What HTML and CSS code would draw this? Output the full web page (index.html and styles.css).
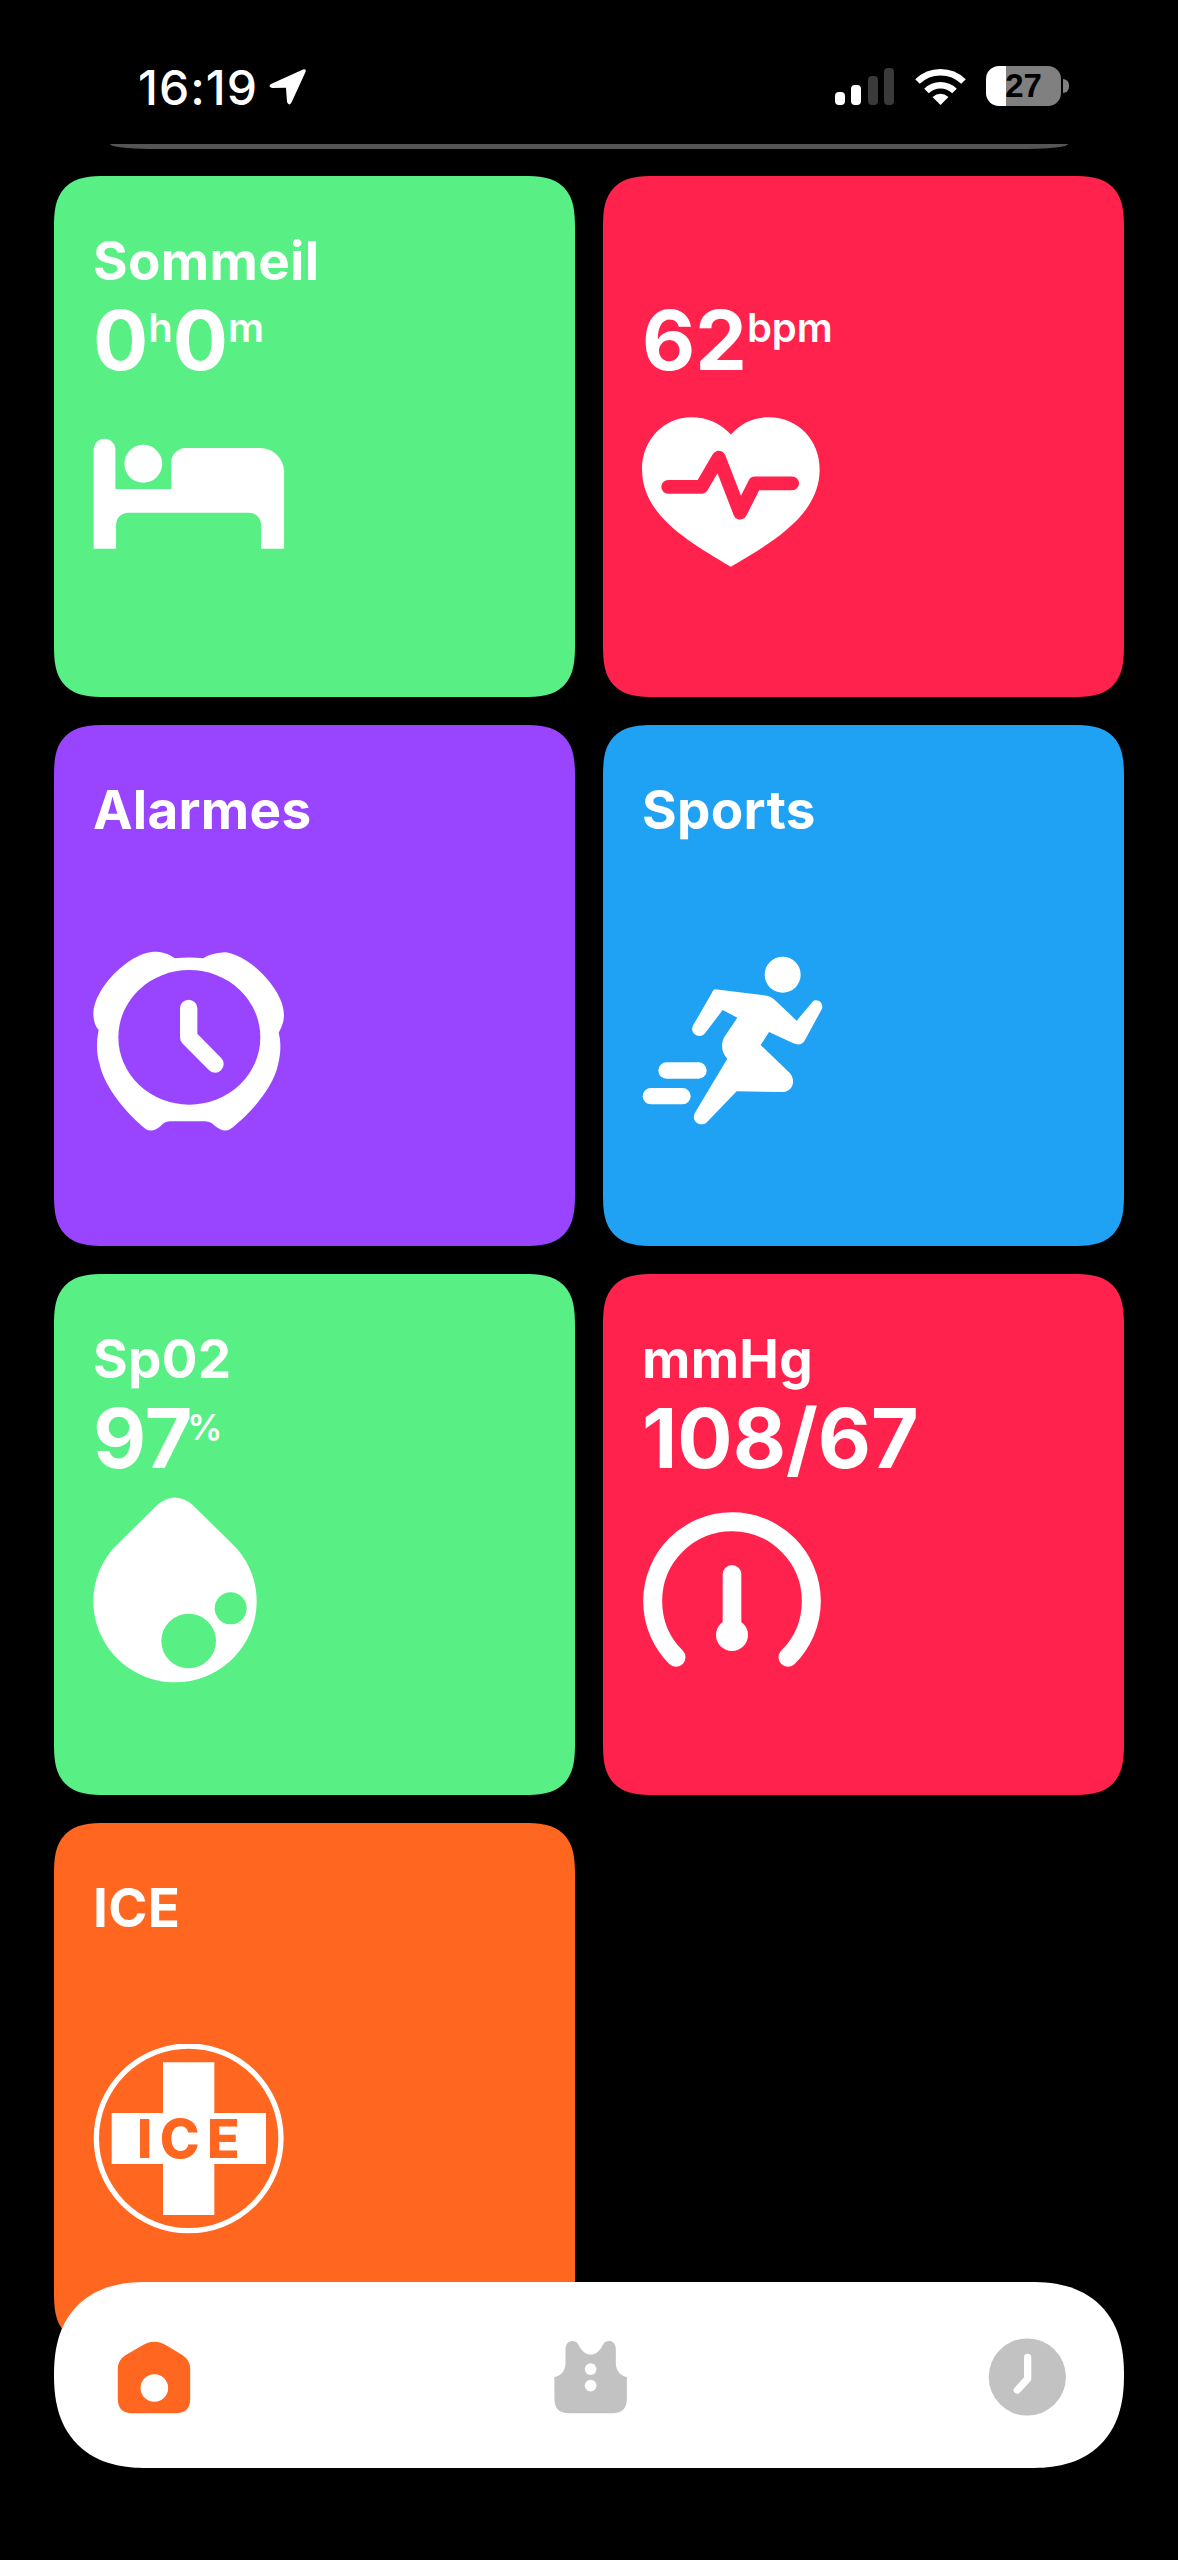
FILE: index.html
```html
<!DOCTYPE html>
<html lang="en">
<head>
    <meta charset="UTF-8">
    <meta name="viewport" content="width=device-width, initial-scale=1.0">
    <title>Health</title>
    <link rel="stylesheet" href="styles.css">
</head>
<body>
    <div class="status-bar">
        <div class="status-left">
            <span class="time">16:19</span>
            <svg class="location" viewBox="0 0 37 36"><path d="M34 .6 2 15q-3.500 2.500 1 4l14-.2 1 14.200q2 4.500 4.500 .5L36.500 3q1-3.500-2.500-2.400Z"/></svg>
        </div>
        <div class="status-right">
            <div class="signal">
                <i class="bar bar-1"></i>
                <i class="bar bar-2"></i>
                <i class="bar bar-3 off"></i>
                <i class="bar bar-4 off"></i>
            </div>
            <svg class="wifi" viewBox="0 0 53 38">
                <path class="wifi-arc" d="M3.500 14.500a33 33 0 0 1 46 0"/>
                <path class="wifi-arc" d="M12.500 24a20 20 0 0 1 28 0"/>
                <path d="M26.500 38 18.500 30q8-6.500 16 0Z"/>
            </svg>
            <div class="battery">27</div>
            <div class="battery-cap"></div>
        </div>
    </div>
    <div class="divider"></div>

    <div class="tiles">
        <div class="tile green">
            <div class="label">Sommeil</div>
            <div class="value">0<span class="unit">h</span>0<span class="unit">m</span></div>
            <svg class="icon" viewBox="125 659 557.600 557.600"><path d="M127 812a31.500 31.500 0 0 1 63 0V926H352V850a43 43 0 0 1 43-43H610a70 70 0 0 1 70 70V1100H613V1030a35 35 0 0 0-35-35H227a35 35 0 0 0-35 35V1100H127Z"/><circle cx="271" cy="853" r="55"/></svg>
        </div>
        <div class="tile red">
            <div class="label"></div>
            <div class="value">62<span class="unit">bpm</span></div>
            <svg class="icon" viewBox="122 659 557.600 557.600"><path d="M380 768C350 735 310 718 265 718 185 718 122 785 122 868 122 1000 250 1075 380 1152 510 1075 638 1000 638 868 638 785 575 718 490 718 445 718 410 735 380 768Z"/><path class="pulse" d="M198 920H295L345 835 407 995 450 910H558"/></svg>
        </div>
        <div class="tile purple">
            <div class="label">Alarmes</div>
            <div class="value"></div>
            <svg class="icon" viewBox="99 78 576 576"><path d="M345 115Q387 110 430 115 450 100 495 97C570 105 672 210 672 285 672 305 665 322 656 338 664 370 662 400 655 430 640 510 560 590 510 628 495 636 480 630 465 618 455 607 445 604 430 604H335C320 604 312 607 302 618 290 630 272 636 258 628 210 590 135 510 118 430 110 400 108 370 116 330 105 318 100 300 100 280 102 205 205 100 280 95 305 95 325 100 345 115Z"/><ellipse class="cut" cx="388" cy="352" rx="213" ry="202"/><path class="hand" d="M386 265V352L465 432"/></svg>
        </div>
        <div class="tile blue">
            <div class="label">Sports</div>
            <div class="value"></div>
            <svg class="icon" viewBox="66 48 576 576"><circle cx="488" cy="134" r="54"/><rect x="115" y="397" width="145" height="49" rx="24.500"/><rect x="68" y="474" width="144" height="49" rx="24.500"/><path d="M285 178 440 197C455 200 462 208 470 215L530 272 578 215C590 203 612 218 606 236L555 330C548 344 535 346 520 340L447 306 422 345 510 430C530 455 515 486 490 486L350 484 262 575C245 595 210 575 225 548L322 386C305 370 300 340 315 318L352 263 308 240 255 310C240 330 205 310 220 285L275 190C278 182 282 178 285 178Z"/></svg>
        </div>
        <div class="tile green">
            <div class="label">Sp02</div>
            <div class="value">97<span class="unit pct">%</span></div>
            <svg class="icon" viewBox="99 585 576 576"><path d="M292 615Q345 570 398 615L520 735C565 780 590 840 590 903 590 1038 480 1147 345 1147 210 1147 100 1038 100 903 100 840 125 780 170 735Z"/><circle class="cut" cx="386" cy="1023" r="82"/><circle class="cut" cx="512" cy="925" r="48"/></svg>
        </div>
        <div class="tile red">
            <div class="label">mmHg</div>
            <div class="value">108/67</div>
            <svg class="icon" viewBox="66 525 576 576"><path class="gauge" d="M168 1012A238 238 0 1 1 504 1012"/><path class="needle" d="M336 763V945"/><circle cx="336" cy="945" r="48"/></svg>
        </div>
        <div class="tile orange">
            <div class="label">ICE</div>
            <div class="value"></div>
            <svg class="icon" viewBox="99 72 576 576"><circle class="ring" cx="386" cy="355" r="277"/><path d="M309 127H463V279H618V432H463V585H309V432H155V279H309Z"/><text class="ice-text" x="231 299 441" y="415">ICE</text></svg>
        </div>
    </div>

    <!-- floats over the last tile -->
    <nav class="tab-bar">
        <svg class="tab" viewBox="41 49 232 232"><path class="tab-on" d="M120 75Q158 50 196 75L240 102Q262 116 262 142V228Q262 270 220 270H94Q52 270 52 228V142Q52 116 74 102Z"/><circle class="tab-hole" cx="158" cy="197" r="40"/></svg>
        <svg class="tab" viewBox="32 49 232 232"><path class="tab-off" d="M74 85C74 55 105 55 112 72 122 92 135 100 147 100 160 100 172 92 182 72 190 55 220 55 220 85V125C220 148 235 162 252 165V228Q252 270 210 270H84Q42 270 42 228V165C60 162 74 148 74 125Z"/><circle class="tab-hole" cx="147" cy="142" r="17"/><circle class="tab-hole" cx="147" cy="190" r="17"/></svg>
        <svg class="tab" viewBox="52 49 232 232"><circle class="tab-off" cx="166" cy="165" r="112"/><path class="clock-hand" d="M167 108V170L137 203"/></svg>
    </nav>
</body>
</html>
```

FILE: styles.css
```css
body {
    margin: 0;
    height: 2560px;
    overflow: hidden;
    position: relative;
    background-color: #000;
    color: #fff;
    font-family: Inter, "Noto Sans", sans-serif;
}

/* status bar */
.status-bar {
    height: 144px;
    box-sizing: border-box;
    padding: 66px 109px 0 138px;
    display: flex;
    justify-content: space-between;
    align-items: flex-start;
}
.status-left {
    display: flex;
    align-items: flex-start;
    gap: 11px;
}
.time {
    font-size: 48px;
    font-weight: 500;
    letter-spacing: 1px;
    line-height: 44px;
}
.location {
    width: 37px;
    height: 36px;
    margin-top: 3px;
    fill: #fff;
}
.status-right {
    display: flex;
    align-items: flex-start;
}
.signal {
    display: flex;
    align-items: flex-end;
    gap: 6.500px;
    height: 37px;
    margin-top: 2px;
    margin-right: 20px;
}
.bar {
    display: block;
    width: 10px;
    border-radius: 4px;
    background-color: #fff;
}
.bar.off { background-color: #3a3a3a; }
.bar-1 { height: 13px; }
.bar-2 { height: 20px; }
.bar-3 { height: 29px; }
.bar-4 { height: 37px; }
.wifi {
    width: 53px;
    height: 38px;
    margin-top: 1px;
    margin-right: 19px;
    fill: #fff;
}
.wifi-arc {
    fill: none;
    stroke: #fff;
    stroke-width: 6.500px;
}
.battery {
    width: 75px;
    height: 40px;
    border-radius: 13px;
    background: linear-gradient(to right, #fff 20px, #808080 20px);
    color: #000;
    font-family: "Liberation Sans", sans-serif;
    font-size: 33px;
    font-weight: 700;
    line-height: 40px;
    text-align: center;
}
.battery-cap {
    width: 6px;
    height: 14px;
    margin: 13px 0 0 2px;
    border-radius: 0 6px 6px 0;
    background-color: #808080;
}
.divider {
    height: 5px;
    margin: 0 110px;
    border-radius: 0 0 40px 40px / 0 0 5px 5px;
    background-color: #555;
}

/* tiles */
.tiles {
    display: grid;
    grid-template-columns: 521px 521px;
    grid-auto-rows: 521px;
    gap: 28px;
    padding: 27px 54px 0;
}
.tile {
    --tile: #58f084;
    display: flex;
    flex-direction: column;
    box-sizing: border-box;
    padding: 54px 39px 108px;
    border-radius: 52px;
    corner-shape: superellipse(1.5);
    background-color: var(--tile);
}
.green { --tile: #58f084; }
.red { --tile: #ff224d; }
.purple { --tile: #9945ff; }
.blue { --tile: #1fa2f3; }
.orange { --tile: #ff6620; }

.label {
    height: 62px;
    font-size: 53px;
    font-weight: 700;
    letter-spacing: .3px;
    line-height: 62px;
}
.value {
    height: 90px;
    margin-top: 4px;
    font-size: 82px;
    font-weight: 700;
    line-height: 90px;
}
.unit {
    font-size: 40px;
    font-weight: 600;
    line-height: 0;
    vertical-align: 28px;
}
.unit.pct {
    font-size: 35px;
    margin-left: -5px;
}
.icon {
    width: 192px;
    height: 192px;
    margin-top: auto;
    fill: #fff;
}
.icon .cut { fill: var(--tile); }
.pulse {
    fill: none;
    stroke: var(--tile);
    stroke-width: 40;
    stroke-linecap: round;
    stroke-linejoin: round;
}
.hand {
    fill: none;
    stroke: #fff;
    stroke-width: 52;
    stroke-linecap: round;
    stroke-linejoin: round;
}
.gauge {
    fill: none;
    stroke: #fff;
    stroke-width: 57;
    stroke-linecap: round;
}
.needle {
    fill: none;
    stroke: #fff;
    stroke-width: 56;
    stroke-linecap: round;
}
.ring {
    fill: none;
    stroke: #fff;
    stroke-width: 16;
}
.ice-text {
    fill: var(--tile);
    font-size: 161px;
    font-weight: 800;
}

/* bottom tabs */
.tab-bar {
    position: absolute;
    left: 54px;
    top: 2282px;
    width: 1070px;
    height: 186px;
    box-sizing: border-box;
    padding: 55px 56px 0 60px;
    display: flex;
    justify-content: space-between;
    align-items: flex-start;
    border-radius: 93px;
    corner-shape: superellipse(1.25);
    background-color: #fff;
}
.tab {
    width: 80px;
    height: 80px;
}
.tab-on { fill: #ff6620; }
.tab-off { fill: #c2c2c2; }
.tab-hole { fill: #fff; }
.clock-hand {
    fill: none;
    stroke: #fff;
    stroke-width: 21;
    stroke-linecap: round;
    stroke-linejoin: round;
}
```
